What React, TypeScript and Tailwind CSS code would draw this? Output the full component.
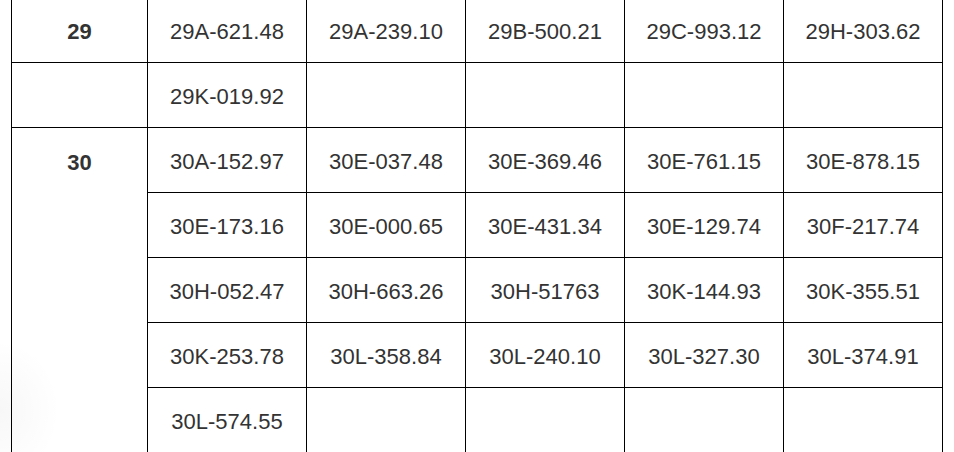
const rows29 = [
  ["29A-621.48", "29A-239.10", "29B-500.21", "29C-993.12", "29H-303.62"],
  ["29K-019.92", "", "", "", ""],
];

const rows30 = [
  ["30A-152.97", "30E-037.48", "30E-369.46", "30E-761.15", "30E-878.15"],
  ["30E-173.16", "30E-000.65", "30E-431.34", "30E-129.74", "30F-217.74"],
  ["30H-052.47", "30H-663.26", "30H-51763", "30K-144.93", "30K-355.51"],
  ["30K-253.78", "30L-358.84", "30L-240.10", "30L-327.30", "30L-374.91"],
  ["30L-574.55", "", "", "", ""],
];

const cell = "border border-black text-center align-middle p-0 pt-[3px] w-[159px]";

const App = () => {
  return (
    <div className="relative min-h-screen bg-white overflow-hidden font-['Liberation_Sans',Arial,sans-serif] text-[22px] leading-[25px] text-[#333]">
      {/* faint shadow at left edge */}
      <div className="absolute left-[-60px] top-[340px] w-[120px] h-[140px] rounded-full bg-[radial-gradient(closest-side,rgba(0,0,0,0.03),rgba(0,0,0,0))]"></div>
      <div className="relative pl-[11px] -mt-[3px]">
        <table className="border-collapse table-fixed w-[931px]">
          <colgroup>
            <col className="w-[136px]" />
            <col />
            <col />
            <col />
            <col />
            <col />
          </colgroup>
          <tbody>
            {rows29.map((r, i) => (
              <tr key={"a" + i} className="h-[65px]">
                <td className="border border-black text-center align-middle font-bold p-0 pt-[3px]">
                  {i === 0 ? "29" : ""}
                </td>
                {r.map((v, j) => (
                  <td key={j} className={cell}>
                    {v}
                  </td>
                ))}
              </tr>
            ))}
            {rows30.map((r, i) => (
              <tr key={"b" + i} className="h-[65px]">
                {i === 0 && (
                  <td rowSpan={5} className="border border-black text-center align-top font-bold p-0 pt-[22px]">
                    30
                  </td>
                )}
                {r.map((v, j) => (
                  <td key={j} className={cell}>
                    {v}
                  </td>
                ))}
              </tr>
            ))}
          </tbody>
        </table>
      </div>
    </div>
  );
};

export default App;
